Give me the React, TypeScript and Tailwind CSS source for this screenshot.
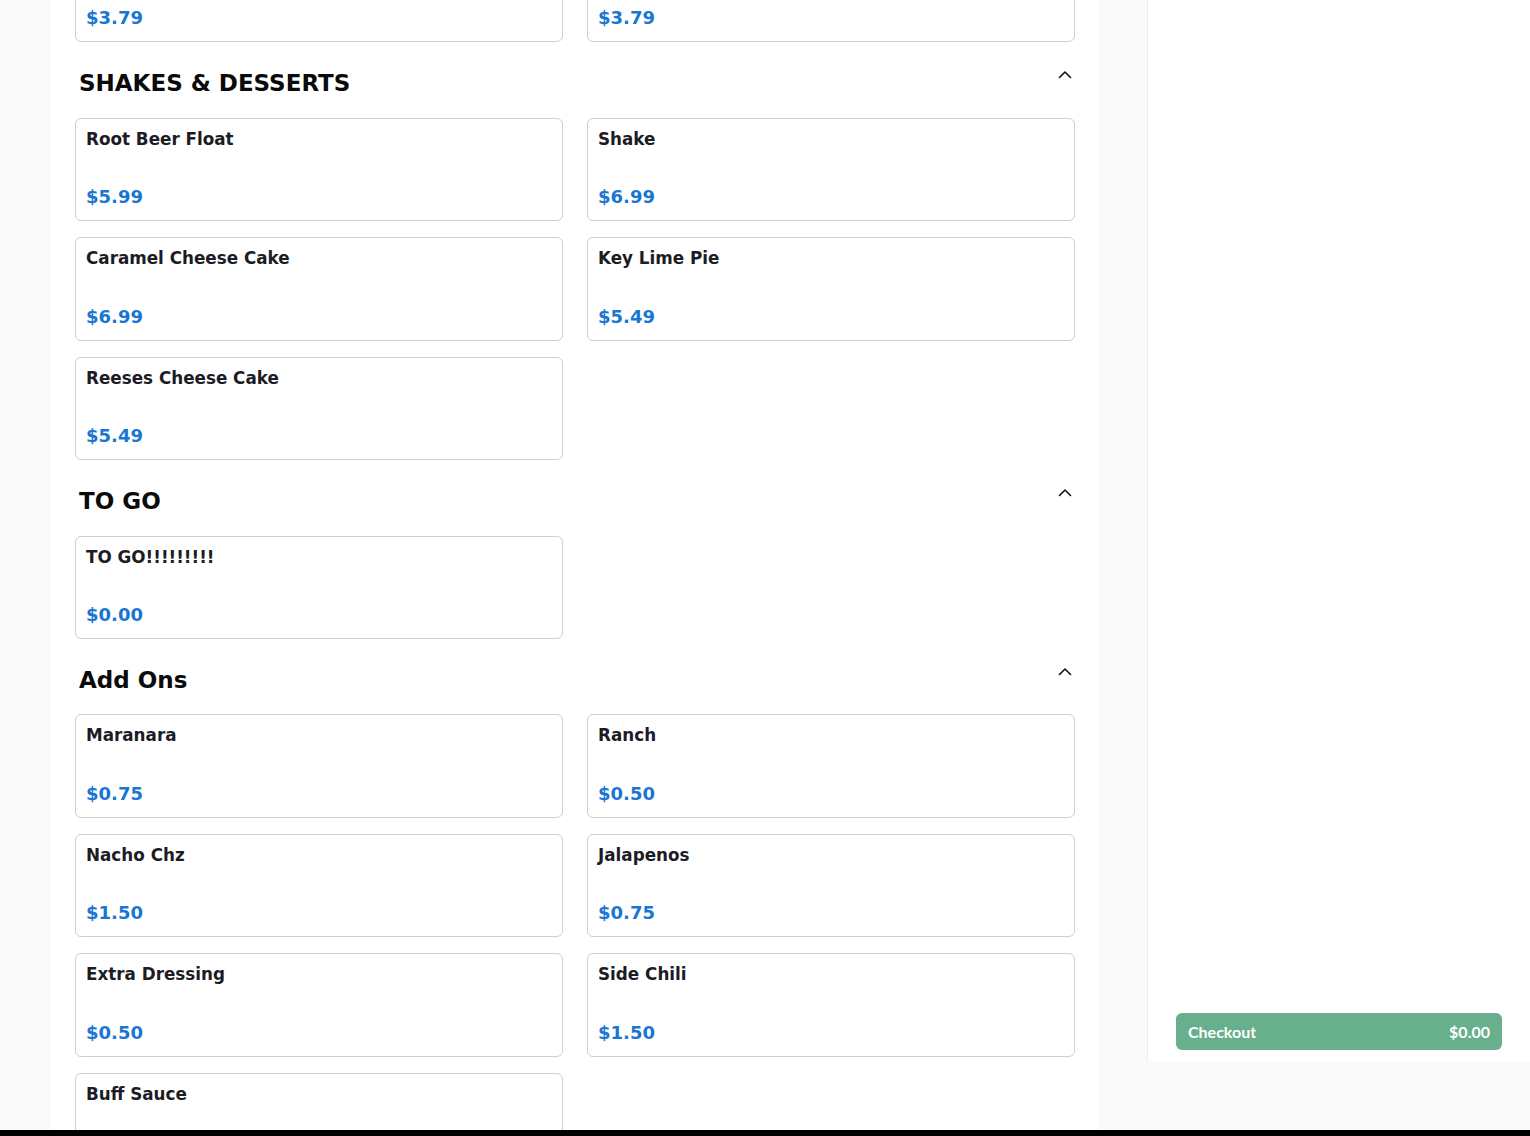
import React from "react";

type Item = { name: string; price: string };

const sections: { title: string | null; items: Item[] }[] = [
  {
    title: null,
    items: [
      { name: "Fountain Drink", price: "$3.79" },
      { name: "Iced Tea", price: "$3.79" },
    ],
  },
  {
    title: "SHAKES & DESSERTS",
    items: [
      { name: "Root Beer Float", price: "$5.99" },
      { name: "Shake", price: "$6.99" },
      { name: "Caramel Cheese Cake", price: "$6.99" },
      { name: "Key Lime Pie", price: "$5.49" },
      { name: "Reeses Cheese Cake", price: "$5.49" },
    ],
  },
  {
    title: "TO GO",
    items: [{ name: "TO GO!!!!!!!!!", price: "$0.00" }],
  },
  {
    title: "Add Ons",
    items: [
      { name: "Maranara", price: "$0.75" },
      { name: "Ranch", price: "$0.50" },
      { name: "Nacho Chz", price: "$1.50" },
      { name: "Jalapenos", price: "$0.75" },
      { name: "Extra Dressing", price: "$0.50" },
      { name: "Side Chili", price: "$1.50" },
      { name: "Buff Sauce", price: "$0.75" },
    ],
  },
];

function Chevron() {
  return (
    <svg width="16" height="16" viewBox="0 0 16 16" fill="none" className="shrink-0">
      <path d="M2.5 10.5 L8 5 L13.5 10.5" stroke="#111" strokeWidth="1.6" strokeLinecap="round" strokeLinejoin="round" />
    </svg>
  );
}

function Card({ item }: { item: Item }) {
  return (
    <div className="h-[103.4px] rounded-[6px] border border-[#cfcfcf] bg-white px-[10px] pt-[7px] pb-[10px] flex flex-col justify-between">
      <div className="text-[16.8px] leading-[27px] font-bold text-[#1c1c24]">{item.name}</div>
      <div className="text-[18px] leading-[27px] font-bold text-[#1976d2]">{item.price}</div>
    </div>
  );
}

export default function App() {
  return (
    <div
      className="h-[1136px] w-[1530px] overflow-hidden flex flex-col bg-[#fafafa]"
      style={{ fontFamily: '"DejaVu Sans", sans-serif' }}
    >
      <div className="h-[1130px] overflow-hidden flex">
        <div className="w-[51px] shrink-0" />
        <main className="w-[1048px] shrink-0 bg-white px-6">
          <div className="mt-[-61px]">
            {sections.map((s, i) => (
              <section key={i}>
                {s.title && (
                  <div className="mt-[25px] mb-[18.5px] flex items-start justify-between pl-1 pr-[2px]">
                    <h2 className="text-[23px] leading-8 font-bold text-[#0a0a0a]">{s.title}</h2>
                    <Chevron />
                  </div>
                )}
                <div className="grid grid-cols-2 gap-x-6 gap-y-4">
                  {s.items.map((it) => (
                    <Card key={it.name} item={it} />
                  ))}
                </div>
              </section>
            ))}
          </div>
        </main>
        <div className="w-[48px] shrink-0" />
        <aside className="flex-1 self-start h-[1062px] bg-white border-l border-[#ededed] flex flex-col justify-end px-7 pb-3">
          <button
            className="h-[37px] w-full rounded-[6px] bg-[#68b08d] text-white flex items-center justify-between px-3 text-[16px] font-bold"
            style={{ fontFamily: '"Lato", "Open Sans", sans-serif' }}
          >
            <span>Checkout</span>
            <span>$0.00</span>
          </button>
        </aside>
      </div>
      <div className="h-[6px] bg-black" />
    </div>
  );
}
